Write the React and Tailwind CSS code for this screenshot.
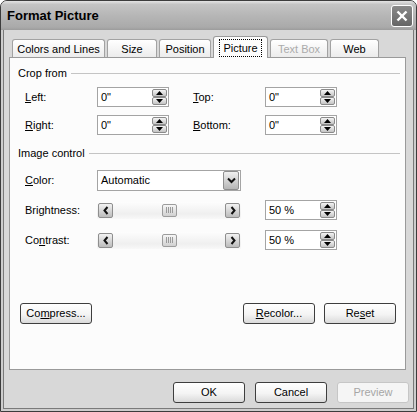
import React from "react";

function U({ children }) {
  return <span className="underline underline-offset-[1px]">{children}</span>;
}

function SpinArrow({ up }) {
  return (
    <svg width="7" height="4" viewBox="0 0 7 4">
      {up ? <polygon points="0,4 3.5,0 7,4" fill="#000" /> : <polygon points="0,0 3.5,4 7,0" fill="#000" />}
    </svg>
  );
}

function SpinBtn({ up }) {
  return (
    <div className="flex items-center justify-center w-[15px] h-[8px] rounded-[2px] border border-[#8a8a8a] bg-[linear-gradient(#f4f4f4,#c4c4c4)]">
      <SpinArrow up={up} />
    </div>
  );
}

function SpinBox({ value }) {
  return (
    <div className="flex items-center w-[72px] h-[20px] border border-[#a4a4a4] bg-white pl-[3px] pr-[1px]">
      <span className="flex-1 text-[11px] leading-none text-black">{value}</span>
      <div className="flex flex-col gap-0">
        <SpinBtn up />
        <SpinBtn />
      </div>
    </div>
  );
}

function Chevron({ dir }) {
  if (dir === "left")
    return (
      <svg width="8" height="9" viewBox="0 0 8 9">
        <polyline points="5.5,1 2.5,4.5 5.5,8" fill="none" stroke="#111" strokeWidth="2" />
      </svg>
    );
  if (dir === "right")
    return (
      <svg width="8" height="9" viewBox="0 0 8 9">
        <polyline points="2.5,1 5.5,4.5 2.5,8" fill="none" stroke="#111" strokeWidth="2" />
      </svg>
    );
  return (
    <svg width="9" height="7" viewBox="0 0 9 7">
      <polyline points="1,1.5 4.5,5 8,1.5" fill="none" stroke="#111" strokeWidth="2" />
    </svg>
  );
}

function ScrollBtn({ dir }) {
  return (
    <div className="flex items-center justify-center w-[15px] h-[15px] rounded-[2px] border border-[#8e8e8e] bg-[linear-gradient(#f2f2f2,#bcbcbc)]">
      <Chevron dir={dir} />
    </div>
  );
}

function Slider() {
  return (
    <div className="flex items-center w-[144px] h-[17px] pl-[1px] pr-[1px] bg-[linear-gradient(#fdfdfd,#efefef_70%,#f8f8f8)]">
      <ScrollBtn dir="left" />
      <div className="flex-1 flex justify-center items-center">
        <div className="flex items-center justify-center gap-[1px] w-[15px] h-[13px] rounded-[2px] border border-[#9c9c9c] bg-[linear-gradient(#f6f6f6,#d0d0d0)]">
          <div className="w-px h-[6px] bg-[#9a9a9a]" />
          <div className="w-px h-[6px] bg-[#9a9a9a]" />
          <div className="w-px h-[6px] bg-[#9a9a9a]" />
          <div className="w-px h-[6px] bg-[#9a9a9a]" />
        </div>
      </div>
      <ScrollBtn dir="right" />
    </div>
  );
}

function Btn({ children, disabled }) {
  return (
    <div
      className={
        disabled
          ? "flex items-center justify-center w-[72px] h-[21px] rounded-[3px] border border-[#c6c6c6] bg-[#f5f5f5] text-[11px] text-[#a6a6a6]"
          : "flex items-center justify-center w-[72px] h-[21px] rounded-[3px] border border-[#3e3e3e] bg-[linear-gradient(#ffffff,#f4f4f4_55%,#dadada)] text-[11px] text-black"
      }
    >
      {children}
    </div>
  );
}

function Tab({ children, w, selected, disabled }) {
  if (selected)
    return (
      <div
        className={`relative z-10 -mb-px flex items-center justify-center h-[22px] rounded-t-[3px] border border-b-0 border-[#9a9a9a] bg-[#fcfcfc] text-[11px] text-black ${w}`}
      >
        <span className="border border-dotted border-black px-[3px] py-[2px] leading-[12px]">{children}</span>
      </div>
    );
  return (
    <div
      className={`flex items-center justify-center h-[18px] pt-px rounded-t-[3px] border border-b-0 border-[#a2a2a2] bg-[linear-gradient(#ffffff,#ececec)] text-[11px] ${
        disabled ? "text-[#ababab]" : "text-black"
      } ${w}`}
    >
      {children}
    </div>
  );
}

function Header({ children }) {
  return (
    <div className="flex items-center h-[13px] pl-[8px] pr-[5px] gap-[4px]">
      <span className="text-[11px] leading-[13px] text-black whitespace-nowrap">{children}</span>
      <div className="flex-1 h-px bg-[#c4c4c4]" />
    </div>
  );
}

export default function App() {
  return (
    <div className="w-[417px] h-[412px] font-[Liberation_Sans,Arial,sans-serif] bg-white">
      <div className="w-[417px] h-[412px] flex flex-col border border-[#3c3c3c] rounded-t-[7px] overflow-hidden bg-[#cdcdcd]">
        {/* Title bar */}
        <div className="flex items-center h-[29px] pl-[6px] pr-[3px] bg-[linear-gradient(#e4e4e4,#c4c4c4_12%,#b6b6b6_50%,#aaaaaa_90%,#9c9c9c)]">
          <span className="flex-1 text-[13px] font-bold text-black">Format Picture</span>
          <div className="flex items-center justify-center w-[22px] h-[22px] rounded-[3px] border border-white bg-[linear-gradient(#8a8a8a,#666666)]">
            <svg width="12" height="12" viewBox="0 0 12 12">
              <line x1="1.5" y1="1.5" x2="10.5" y2="10.5" stroke="#fff" strokeWidth="2.4" />
              <line x1="10.5" y1="1.5" x2="1.5" y2="10.5" stroke="#fff" strokeWidth="2.4" />
            </svg>
          </div>
        </div>
        {/* Body */}
        <div className="flex-1 mx-[2px] mb-[2px] border-x border-b border-[#7a7a7a] bg-[#d8d8d8] flex flex-col pt-[6px] pl-[5px]">
          <div className="flex items-end gap-[2px] pl-[3px]">
            <Tab w="w-[93px]">Colors and Lines</Tab>
            <Tab w="w-[50px]">Size</Tab>
            <Tab w="w-[52px]">Position</Tab>
            <Tab w="w-[55px]" selected>Picture</Tab>
            <Tab w="w-[58px]" disabled>Text Box</Tab>
            <Tab w="w-[49px]">Web</Tab>
          </div>
          <div className="w-[397px] h-[313px] border border-[#9a9a9a] bg-[#fcfcfc] flex flex-col text-[11px] text-black">
            <div className="mt-[9px]">
              <Header>Crop from</Header>
            </div>
            <div className="mt-[7px] flex items-center h-[20px] pl-[15px]">
              <span className="w-[72px]"><U>L</U>eft:</span>
              <SpinBox value={'0"'} />
              <span className="w-[72px] ml-[24px]"><U>T</U>op:</span>
              <SpinBox value={'0"'} />
            </div>
            <div className="mt-[8px] flex items-center h-[20px] pl-[15px]">
              <span className="w-[72px]"><U>R</U>ight:</span>
              <SpinBox value={'0"'} />
              <span className="w-[72px] ml-[24px]"><U>B</U>ottom:</span>
              <SpinBox value={'0"'} />
            </div>
            <div className="mt-[12px]">
              <Header>Image control</Header>
            </div>
            <div className="mt-[10px] flex items-center h-[21px] pl-[15px]">
              <span className="w-[72px]"><U>C</U>olor:</span>
              <div className="flex items-center w-[144px] h-[21px] border border-[#a4a4a4] bg-white pl-[3px] pr-px">
                <span className="flex-1">Automatic</span>
                <div className="flex items-center justify-center w-[16px] h-[19px] rounded-[2px] border border-[#8e8e8e] bg-[linear-gradient(#f0f0f0,#b6b6b6)]">
                  <Chevron dir="down" />
                </div>
              </div>
            </div>
            <div className="mt-[9px] flex items-center h-[20px] pl-[15px]">
              <span className="w-[72px]">Bri<U>g</U>htness:</span>
              <Slider />
              <div className="ml-[24px]">
                <SpinBox value="50 %" />
              </div>
            </div>
            <div className="mt-[10px] flex items-center h-[20px] pl-[15px]">
              <span className="w-[72px]">Co<U>n</U>trast:</span>
              <Slider />
              <div className="ml-[24px]">
                <SpinBox value="50 %" />
              </div>
            </div>
            <div className="mt-[53px] flex items-center pl-[10px]">
              <Btn>Co<U>m</U>press...</Btn>
              <div className="ml-[151px]">
                <Btn><U>R</U>ecolor...</Btn>
              </div>
              <div className="ml-[9px]">
                <Btn>Re<U>s</U>et</Btn>
              </div>
            </div>
          </div>
          <div className="mt-[12px] flex justify-end gap-[10px] pr-[4px]">
            <Btn>OK</Btn>
            <Btn>Cancel</Btn>
            <Btn disabled>Preview</Btn>
          </div>
        </div>
      </div>
    </div>
  );
}
